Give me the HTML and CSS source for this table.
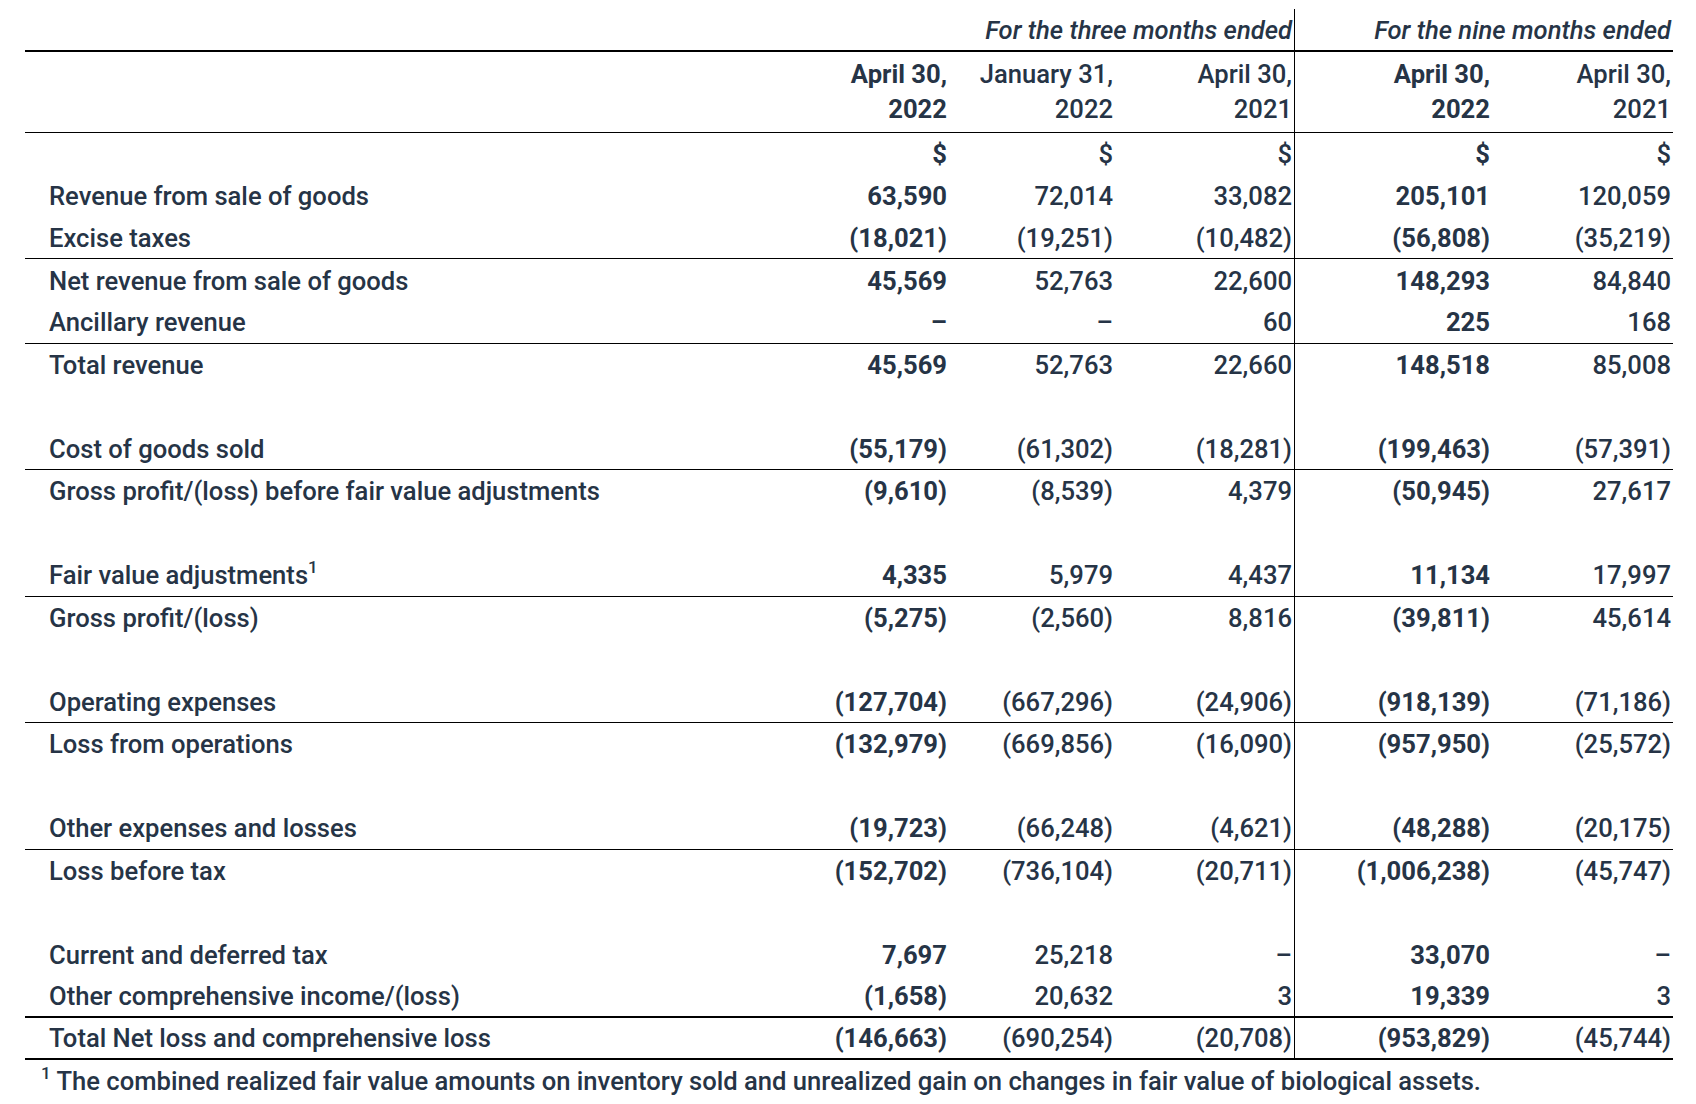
FILE: index.html
```html
<!DOCTYPE html>
<html>
<head>
<meta charset="utf-8">
<link rel="stylesheet" href="styles.css">
</head>
<body>
<div class="fin">
  <div class="row head-period">
    <div class="cell span3 sep">For the three months ended</div>
    <div class="cell span2">For the nine months ended</div>
  </div>
  <div class="row head-dates">
    <div class="cell label"></div>
    <div class="cell b">April 30,<br>2022</div>
    <div class="cell">January 31,<br>2022</div>
    <div class="cell sep">April 30,<br>2021</div>
    <div class="cell b">April 30,<br>2022</div>
    <div class="cell">April 30,<br>2021</div>
  </div>

  <div class="row"><div class="cell label"></div><div class="cell b">$</div><div class="cell">$</div><div class="cell sep">$</div><div class="cell b">$</div><div class="cell">$</div></div>
  <div class="row"><div class="cell label">Revenue from sale of goods</div><div class="cell b">63,590</div><div class="cell">72,014</div><div class="cell sep">33,082</div><div class="cell b">205,101</div><div class="cell">120,059</div></div>
  <div class="row ul"><div class="cell label">Excise taxes</div><div class="cell b">(18,021)</div><div class="cell">(19,251)</div><div class="cell sep">(10,482)</div><div class="cell b">(56,808)</div><div class="cell">(35,219)</div></div>
  <div class="row"><div class="cell label">Net revenue from sale of goods</div><div class="cell b">45,569</div><div class="cell">52,763</div><div class="cell sep">22,600</div><div class="cell b">148,293</div><div class="cell">84,840</div></div>
  <div class="row ul"><div class="cell label">Ancillary revenue</div><div class="cell b">–</div><div class="cell">–</div><div class="cell sep">60</div><div class="cell b">225</div><div class="cell">168</div></div>
  <div class="row"><div class="cell label">Total revenue</div><div class="cell b">45,569</div><div class="cell">52,763</div><div class="cell sep">22,660</div><div class="cell b">148,518</div><div class="cell">85,008</div></div>
  <div class="row"><div class="cell label"></div><div class="cell"></div><div class="cell"></div><div class="cell sep"></div><div class="cell"></div><div class="cell"></div></div>
  <div class="row ul"><div class="cell label">Cost of goods sold</div><div class="cell b">(55,179)</div><div class="cell">(61,302)</div><div class="cell sep">(18,281)</div><div class="cell b">(199,463)</div><div class="cell">(57,391)</div></div>
  <div class="row"><div class="cell label">Gross profit/(loss) before fair value adjustments</div><div class="cell b">(9,610)</div><div class="cell">(8,539)</div><div class="cell sep">4,379</div><div class="cell b">(50,945)</div><div class="cell">27,617</div></div>
  <div class="row"><div class="cell label"></div><div class="cell"></div><div class="cell"></div><div class="cell sep"></div><div class="cell"></div><div class="cell"></div></div>
  <div class="row ul"><div class="cell label"><span>Fair value adjustments<sup>1</sup></span></div><div class="cell b">4,335</div><div class="cell">5,979</div><div class="cell sep">4,437</div><div class="cell b">11,134</div><div class="cell">17,997</div></div>
  <div class="row"><div class="cell label">Gross profit/(loss)</div><div class="cell b">(5,275)</div><div class="cell">(2,560)</div><div class="cell sep">8,816</div><div class="cell b">(39,811)</div><div class="cell">45,614</div></div>
  <div class="row"><div class="cell label"></div><div class="cell"></div><div class="cell"></div><div class="cell sep"></div><div class="cell"></div><div class="cell"></div></div>
  <div class="row ul"><div class="cell label">Operating expenses</div><div class="cell b">(127,704)</div><div class="cell">(667,296)</div><div class="cell sep">(24,906)</div><div class="cell b">(918,139)</div><div class="cell">(71,186)</div></div>
  <div class="row"><div class="cell label">Loss from operations</div><div class="cell b">(132,979)</div><div class="cell">(669,856)</div><div class="cell sep">(16,090)</div><div class="cell b">(957,950)</div><div class="cell">(25,572)</div></div>
  <div class="row"><div class="cell label"></div><div class="cell"></div><div class="cell"></div><div class="cell sep"></div><div class="cell"></div><div class="cell"></div></div>
  <div class="row ul"><div class="cell label">Other expenses and losses</div><div class="cell b">(19,723)</div><div class="cell">(66,248)</div><div class="cell sep">(4,621)</div><div class="cell b">(48,288)</div><div class="cell">(20,175)</div></div>
  <div class="row"><div class="cell label">Loss before tax</div><div class="cell b">(152,702)</div><div class="cell">(736,104)</div><div class="cell sep">(20,711)</div><div class="cell b">(1,006,238)</div><div class="cell">(45,747)</div></div>
  <div class="row"><div class="cell label"></div><div class="cell"></div><div class="cell"></div><div class="cell sep"></div><div class="cell"></div><div class="cell"></div></div>
  <div class="row"><div class="cell label">Current and deferred tax</div><div class="cell b">7,697</div><div class="cell">25,218</div><div class="cell sep">–</div><div class="cell b">33,070</div><div class="cell">–</div></div>
  <div class="row ul2"><div class="cell label">Other comprehensive income/(loss)</div><div class="cell b">(1,658)</div><div class="cell">20,632</div><div class="cell sep">3</div><div class="cell b">19,339</div><div class="cell">3</div></div>
  <div class="row ul2"><div class="cell label">Total Net loss and comprehensive loss</div><div class="cell b">(146,663)</div><div class="cell">(690,254)</div><div class="cell sep">(20,708)</div><div class="cell b">(953,829)</div><div class="cell">(45,744)</div></div>
</div>
<p class="note"><sup>1</sup> The combined realized fair value amounts on inventory sold and unrealized gain on changes in fair value of biological assets.</p>
</body>
</html>
```

FILE: styles.css
```css
html, body {
  margin: 0;
  padding: 0;
  background: #ffffff;
}

body {
  font-family: Roboto, "Liberation Sans", sans-serif;
  font-size: 25.6px;
  font-weight: 500;
  color: #263446;
}

.fin {
  margin: 9px 0 0 25px;
  width: 1648px;
}

.row {
  display: grid;
  grid-template-columns: 763px 161px 166px 180px 197px 181px;
  height: 42.17px;
  box-sizing: border-box;
}

.cell {
  display: flex;
  align-items: center;
  justify-content: flex-end;
  padding-right: 2px;
  line-height: 30px;
  white-space: nowrap;
  box-sizing: border-box;
}

.cell.label {
  justify-content: flex-start;
  padding-left: 24px;
  padding-right: 0;
}

.b {
  font-weight: 700;
}

.sep {
  border-right: 1px solid #000;
}

.ul {
  border-bottom: 1px solid #000;
}

.ul2 {
  border-bottom: 2px solid #000;
}

.head-period {
  height: 43px;
  border-bottom: 2px solid #000;
}

.head-period .cell {
  font-style: italic;
  font-weight: 500;
}

.span3 {
  grid-column: 2 / span 3;
}

.span2 {
  grid-column: 5 / span 2;
}

.head-dates {
  height: 81px;
  border-bottom: 1px solid #000;
}

.head-dates .cell {
  align-items: flex-start;
  text-align: right;
  line-height: 35px;
  padding-top: 5px;
}

sup {
  font-size: 17px;
  line-height: 0;
  vertical-align: 11px;
}

.note {
  margin: 6px 0 0 41px;
  line-height: 30px;
  font-weight: 500;
}
```
